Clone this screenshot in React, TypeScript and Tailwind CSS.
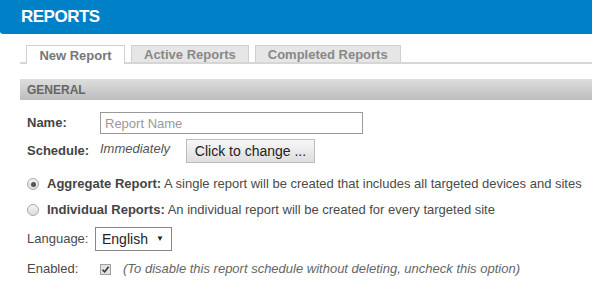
import React from "react";

const tabs = ["New Report", "Active Reports", "Completed Reports"];

function Radio({ checked }: { checked?: boolean }) {
  return (
    <span className="w-[12px] h-[12px] rounded-full border border-[#a9a9a9] bg-gradient-to-b from-[#f4f4f4] to-[#dcdcdc] flex items-center justify-center shrink-0">
      {checked && <span className="w-[5px] h-[5px] rounded-full bg-[#555]" />}
    </span>
  );
}

function Check() {
  return (
    <span className="w-[11px] h-[11px] border border-[#a0a0a0] bg-[#e2e2e2] flex items-center justify-center shrink-0">
      <svg width="9" height="9" viewBox="0 0 9 9">
        <path d="M1.5 4.8 L3.6 6.9 L7.6 1.8" fill="none" stroke="#333" strokeWidth="1.6" />
      </svg>
    </span>
  );
}

export default function App() {
  return (
    <div className="w-[592px] h-[287px] overflow-hidden bg-white [font-family:'Liberation_Sans',Arial,sans-serif] text-[13px] text-[#4a4a4a]">
      <div className="h-[34px] bg-[#0080c6] rounded-bl-[3px] flex items-center pl-[21px]">
        <h1 className="text-white font-bold text-[17px] tracking-[-0.5px]">REPORTS</h1>
      </div>

      <div className="ml-[20px] mt-[11px] flex items-end gap-[6px] pl-[6px] border-b-2 border-[#d6d6d6] h-[17px] box-content">
        {tabs.map((t, i) => (
          <div
            key={t}
            className={
              i === 0
                ? "h-[19px] -mb-[2px] w-[99px] whitespace-nowrap flex items-center justify-center pt-[2px] border border-b-0 border-[#d0d0d0] bg-white font-bold text-[#777]"
                : "h-[17px] px-[12px] whitespace-nowrap flex items-center justify-center pt-[2px] border border-b-0 border-[#d0d0d0] bg-[#e6e6e6] font-bold text-[#888]"
            }
          >
            {t}
          </div>
        ))}
      </div>

      <div className="ml-[20px] mt-[15px] h-[21px] bg-gradient-to-b from-[#dedede] to-[#bdbdbd] flex items-center pl-[7px] font-bold text-[12px] text-[#666]">
        GENERAL
      </div>

      <div className="pl-[27px] pt-[12px] flex flex-col">
        <div className="flex items-center h-[22px]">
          <span className="w-[73px] font-bold text-[#444]">Name:</span>
          <input
            placeholder="Report Name"
            className="w-[263px] h-[22px] border border-[#999] px-[4px] text-[13px] placeholder:text-[#999] outline-none"
          />
        </div>
        <div className="flex items-center h-[24px] mt-[5px]">
          <span className="w-[73px] font-bold text-[#444]">Schedule:</span>
          <span className="italic text-[#555] w-[86px] -mt-[4px]">Immediately</span>
          <button className="h-[24px] w-[129px] border border-[#bdbdbd] bg-gradient-to-b from-[#f7f7f7] to-[#dedede] text-[14px] text-[#222]">
            Click to change ...
          </button>
        </div>

        <label className="flex items-center h-[20px] mt-[11px]">
          <Radio checked />
          <span className="ml-[8px]">
            <b className="text-[#444]">Aggregate Report:</b> A single report will be created that includes all targeted devices and sites
          </span>
        </label>
        <label className="flex items-center h-[20px] mt-[6px]">
          <Radio />
          <span className="ml-[8px]">
            <b className="text-[#444]">Individual Reports:</b> An individual report will be created for every targeted site
          </span>
        </label>

        <div className="flex items-center h-[24px] mt-[7px]">
          <span className="w-[68px]">Language:</span>
          <div className="w-[77px] h-[24px] border border-[#888] flex items-center justify-between pl-[6px] pr-[7px] text-[14px] text-[#222]">
            English
            <span className="text-[8px]">▼</span>
          </div>
        </div>

        <div className="flex items-center h-[20px] mt-[8px]">
          <span className="w-[73px]">Enabled:</span>
          <Check />
          <span className="ml-[12px] italic text-[#666]">
            (To disable this report schedule without deleting, uncheck this option)
          </span>
        </div>
      </div>
    </div>
  );
}
